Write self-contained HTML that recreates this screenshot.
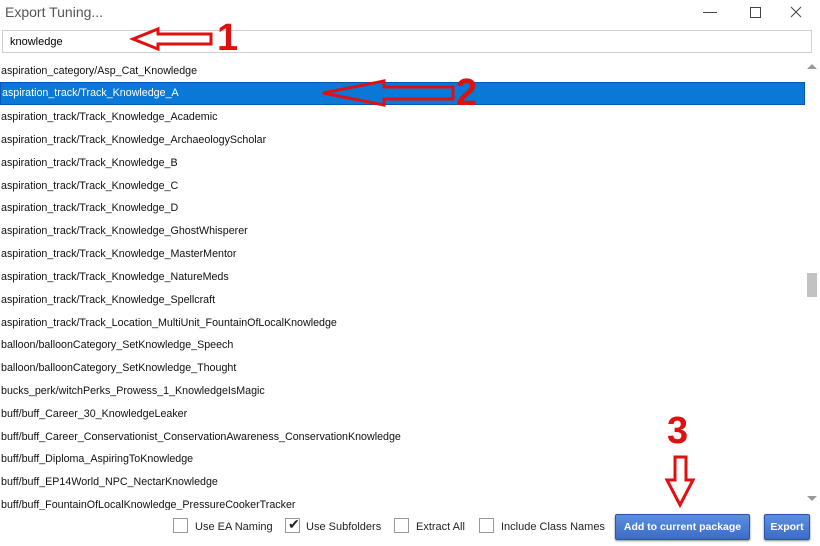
<!DOCTYPE html>
<html><head><meta charset="utf-8"><style>
body{margin:0;width:820px;height:546px;background:#fff;font-family:"Liberation Sans",sans-serif;position:relative;overflow:hidden}
.t{position:absolute;left:5px;top:4px;font-size:14px;color:#555}
.search{position:absolute;left:2px;top:30px;width:810px;height:23px;border:1px solid #d0d0d0;box-sizing:border-box}
.search span{position:absolute;left:7px;top:5px;font-size:11px;color:#000}
.row{position:absolute;left:0;width:805px;height:23px;font-size:10.7px;line-height:23px;color:#111;padding-left:1px;white-space:nowrap}
.sel{background:#0a78d7;color:#fff;border:1px solid #0058b0;box-sizing:border-box;line-height:21px}
.cb{position:absolute;top:518px;width:15px;height:15px;border:1px solid #999;background:#fff;box-sizing:border-box}
.lab{position:absolute;top:521px;font-size:11px;color:#222}
.btn{position:absolute;top:514px;height:24px;background:linear-gradient(#5b8fe0,#3c6cc8);border:1px solid #2a55a8;border-radius:2px;color:#fff;font-weight:bold;font-size:10.5px;line-height:24px;text-align:center;box-shadow:0 1px 2px #888}
.red{position:absolute;color:#e01010;font-weight:bold;font-size:38px;font-family:"Liberation Sans",sans-serif}
</style></head><body>
<div class="t">Export Tuning...</div>
<div style="position:absolute;left:703px;top:12px;width:14px;height:0;border-bottom:1px solid #444"></div>
<div style="position:absolute;left:750px;top:7px;width:9px;height:9px;border:1px solid #444"></div>
<svg style="position:absolute;left:790px;top:6px" width="12" height="12"><path d="M1 1L11 11M11 1L1 11" stroke="#444" stroke-width="1"/></svg>
<div class="search"><span>knowledge</span></div>
<div class="row" style="top:60px">aspiration_category/Asp_Cat_Knowledge</div>
<div class="row sel" style="top:82px">aspiration_track/Track_Knowledge_A</div>
<div class="row" style="top:106px">aspiration_track/Track_Knowledge_Academic</div>
<div class="row" style="top:129px">aspiration_track/Track_Knowledge_ArchaeologyScholar</div>
<div class="row" style="top:152px">aspiration_track/Track_Knowledge_B</div>
<div class="row" style="top:175px">aspiration_track/Track_Knowledge_C</div>
<div class="row" style="top:197px">aspiration_track/Track_Knowledge_D</div>
<div class="row" style="top:220px">aspiration_track/Track_Knowledge_GhostWhisperer</div>
<div class="row" style="top:243px">aspiration_track/Track_Knowledge_MasterMentor</div>
<div class="row" style="top:266px">aspiration_track/Track_Knowledge_NatureMeds</div>
<div class="row" style="top:289px">aspiration_track/Track_Knowledge_Spellcraft</div>
<div class="row" style="top:312px">aspiration_track/Track_Location_MultiUnit_FountainOfLocalKnowledge</div>
<div class="row" style="top:334px">balloon/balloonCategory_SetKnowledge_Speech</div>
<div class="row" style="top:357px">balloon/balloonCategory_SetKnowledge_Thought</div>
<div class="row" style="top:380px">bucks_perk/witchPerks_Prowess_1_KnowledgeIsMagic</div>
<div class="row" style="top:403px">buff/buff_Career_30_KnowledgeLeaker</div>
<div class="row" style="top:426px">buff/buff_Career_Conservationist_ConservationAwareness_ConservationKnowledge</div>
<div class="row" style="top:448px">buff/buff_Diploma_AspiringToKnowledge</div>
<div class="row" style="top:471px">buff/buff_EP14World_NPC_NectarKnowledge</div>
<div style="position:absolute;left:0;top:494px;width:805px;height:16px;overflow:hidden"><div class="row" style="top:0">buff/buff_FountainOfLocalKnowledge_PressureCookerTracker</div></div>
<svg style="position:absolute;left:806px;top:62px" width="12" height="8"><path d="M1 7L6 2L11 7Z" fill="#999"/></svg>
<div style="position:absolute;left:807px;top:273px;width:10px;height:24px;background:#c2c2c2"></div>
<svg style="position:absolute;left:806px;top:495px" width="12" height="8"><path d="M1 1L6 6L11 1Z" fill="#999"/></svg>
<div class="cb" style="left:173px"></div><div class="lab" style="left:195px">Use EA Naming</div>
<div class="cb" style="left:285px"></div><div class="lab" style="left:288px;top:516px;font-size:14px">✔</div><div class="lab" style="left:306px">Use Subfolders</div>
<div class="cb" style="left:394px"></div><div class="lab" style="left:416px">Extract All</div>
<div class="cb" style="left:479px"></div><div class="lab" style="left:501px">Include Class Names</div>
<div class="btn" style="left:615px;width:133px">Add to current package</div>
<div class="btn" style="left:764px;width:44px">Export</div>
<svg style="position:absolute;left:0;top:0" width="820" height="546">
<path d="M133 39L158 29V34H211V44H158V49Z" fill="none" stroke="#e01010" stroke-width="3"/>
<path d="M323 93L384 81V87H453V99H384V105Z" fill="none" stroke="#e01010" stroke-width="3"/>
<path d="M675 457H686V480H693L680 505L667 480H675Z" fill="none" stroke="#e01010" stroke-width="3"/>
</svg>
<div class="red" style="left:217px;top:17px">1</div>
<div class="red" style="left:456px;top:72px">2</div>
<div class="red" style="left:667px;top:410px">3</div>
</body></html>
